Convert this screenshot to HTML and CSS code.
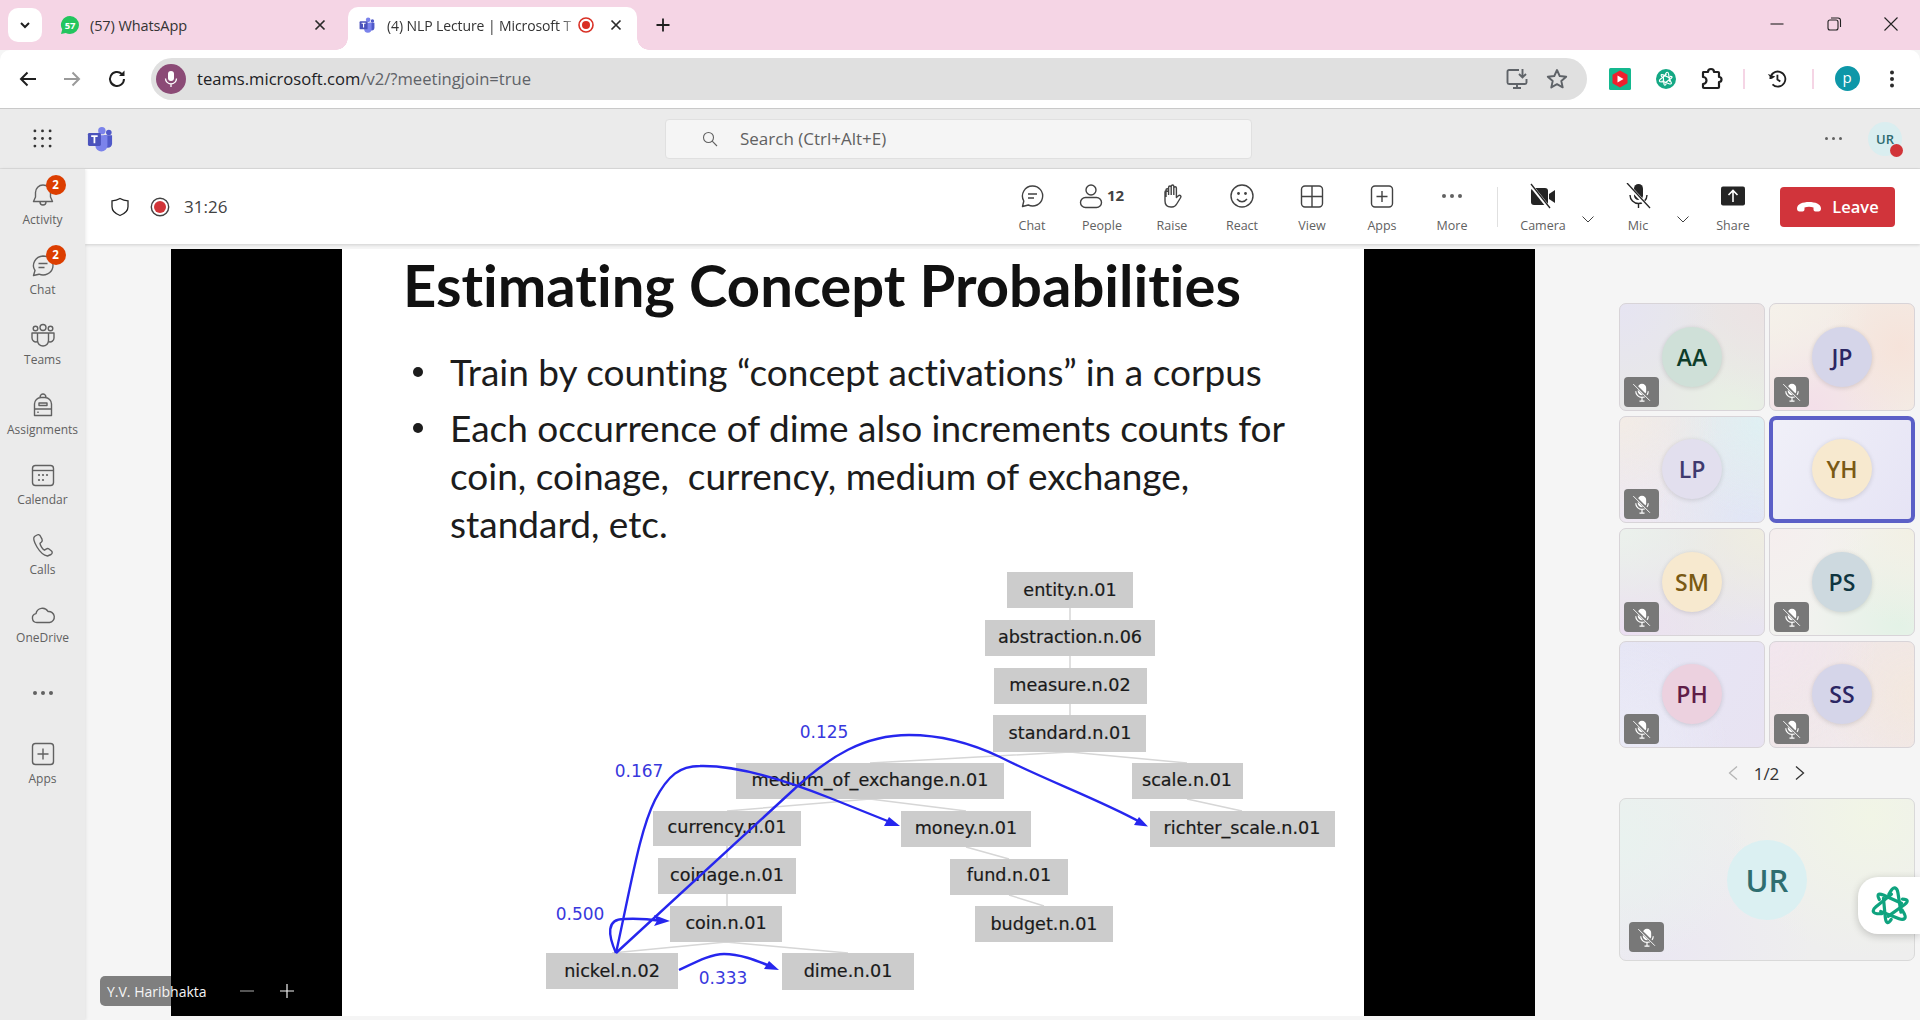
FILE: index.html
```html
<!DOCTYPE html>
<html lang="en">
<head>
<meta charset="utf-8">
<title>NLP Lecture | Microsoft Teams</title>
<link rel="stylesheet" href="styles.css">
</head>
<body>
<svg class="defs" aria-hidden="true">
  <symbol id="mute" viewBox="0 0 24 24">
    <rect x="7" y="2" width="10" height="14" rx="5" fill="#fff"/>
    <path d="M4.500 11a7.500 7.500 0 0 0 15 0M12 18.500V23M9 23h6" fill="none" stroke="#fff" stroke-width="1.400"/>
    <path d="M2 2 22 22" stroke="#787878" stroke-width="3.400"/>
    <path d="M1.500 2.500 21.500 22.500" stroke="#fff" stroke-width="1.100"/>
  </symbol>
  <symbol id="knot" viewBox="0 0 40 40">
    <g fill="none" stroke-width="3.200" stroke-linecap="round" transform="rotate(12 20 20)">
      <path d="M15.500 9Q17.500 1.500 20 1.500T24 5.500L31 24"/>
      <path d="M15.500 9Q17.500 1.500 20 1.500T24 5.500L31 24" transform="rotate(120 20 20)"/>
      <path d="M15.500 9Q17.500 1.500 20 1.500T24 5.500L31 24" transform="rotate(240 20 20)"/>
      <path d="M17 7Q18.500 3 20 3T23 7L29 26" transform="rotate(60 20 20)"/>
      <path d="M17 7Q18.500 3 20 3T23 7L29 26" transform="rotate(180 20 20)"/>
      <path d="M17 7Q18.500 3 20 3T23 7L29 26" transform="rotate(300 20 20)"/>
    </g>
  </symbol>
  <symbol id="teams" viewBox="0 0 28 28">
    <circle cx="16" cy="5" r="4" fill="#7b83eb"/>
    <circle cx="23.500" cy="7" r="3" fill="#5059c9"/>
    <path d="M18 10h9v9a4.500 4.500 0 0 1-9 0z" fill="#5059c9"/>
    <path d="M9 10h13v11a6.500 6.500 0 0 1-13 0z" fill="#7b83eb"/>
    <rect x="1" y="7.500" width="14" height="14" rx="1.500" fill="#4b53bc"/>
    <path d="M4.500 11h7M8 11v7.500" stroke="#fff" stroke-width="1.900" fill="none"/>
  </symbol>
</svg>

<header class="tabstrip">
  <div class="tab-menu">
    <svg class="i16" viewBox="0 0 16 16"><path d="M4 6l4 4 4-4" fill="none" stroke="#1f1f1f" stroke-width="2"/></svg>
  </div>
  <div class="tab">
    <svg class="i20 tab-icon-wa" viewBox="0 0 20 20"><path d="M10 1a9 9 0 0 1 0 18 9 9 0 0 1-4.300-1.100L1 19l1.200-4.500A9 9 0 0 1 10 1z" fill="#22c55e"/><text x="10" y="13.500" class="wa-count">57</text></svg>
    <span class="tab-title">(57) WhatsApp</span>
    <svg class="i16 tab-close" viewBox="0 0 16 16"><path d="M3.500 3.500l9 9M12.500 3.500l-9 9" stroke="#2b2b2b" stroke-width="1.700"/></svg>
  </div>
  <div class="tab tab-active">
    <svg class="i16 tab-icon" viewBox="0 0 28 28"><use href="#teams"/></svg>
    <span class="tab-title tab-title-fade">(4) NLP Lecture | Microsoft T</span>
    <svg class="i16 tab-rec" viewBox="0 0 16 16"><circle cx="8" cy="8" r="7" fill="none" stroke="#d93025" stroke-width="1.600"/><circle cx="8" cy="8" r="4" fill="#d93025"/></svg>
    <svg class="i16 tab-close tab-close-active" viewBox="0 0 16 16"><path d="M3.500 3.500l9 9M12.500 3.500l-9 9" stroke="#2b2b2b" stroke-width="1.700"/></svg>
  </div>
  <svg class="tab-plus" viewBox="0 0 18 18"><path d="M9 2.500v13M2.500 9h13" stroke="#1f1f1f" stroke-width="1.800"/></svg>
  <div class="win-controls">
    <svg class="i16" viewBox="0 0 16 16"><path d="M1.500 8h13" stroke="#222" stroke-width="1.100"/></svg>
    <svg class="i16" viewBox="0 0 16 16"><rect x="2" y="4" width="10" height="10" rx="2" fill="none" stroke="#222" stroke-width="1.100"/><path d="M5 2h7a2.500 2.500 0 0 1 2.500 2.500V11" fill="none" stroke="#222" stroke-width="1.100"/></svg>
    <svg class="i16" viewBox="0 0 16 16"><path d="M1.500 1.500l13 13M14.500 1.500l-13 13" stroke="#222" stroke-width="1.100"/></svg>
  </div>
</header>

<nav class="toolbar">
  <svg class="nav-btn" viewBox="0 0 24 24"><path d="M20 12H5M11.500 5.500 5 12l6.500 6.500" fill="none" stroke="#1f1f1f" stroke-width="2"/></svg>
  <svg class="nav-btn nav-fwd" viewBox="0 0 24 24"><path d="M4 12h15M12.500 5.500 19 12l-6.500 6.500" fill="none" stroke="#9a9a9a" stroke-width="2"/></svg>
  <svg class="nav-btn nav-reload" viewBox="0 0 24 24"><path d="M19 12a7 7 0 1 1-2.200-5.100" fill="none" stroke="#1f1f1f" stroke-width="2"/><path d="M19.500 3.500V9H14z" fill="#1f1f1f"/></svg>
  <div class="omnibox">
    <span class="omni-mic">
      <svg class="i20" viewBox="0 0 20 20"><rect x="7" y="2" width="6" height="10" rx="3" fill="#fff"/><path d="M4.500 9.500a5.500 5.500 0 0 0 11 0M10 15v3" fill="none" stroke="#fff" stroke-width="1.300"/></svg>
    </span>
    <span class="url"><span class="url-host">teams.microsoft.com</span>/v2/?meetingjoin=true</span>
    <svg class="omni-action" viewBox="0 0 24 24"><path d="M14 3H4a1.500 1.500 0 0 0-1.500 1.500v11A1.500 1.500 0 0 0 4 17h16a1.500 1.500 0 0 0 1.500-1.500V12" fill="none" stroke="#5f6368" stroke-width="1.900"/><path d="M8 21h8M12 17v4" stroke="#5f6368" stroke-width="1.900"/><path d="M17.500 2v8M14 7l3.500 3.500L21 7" fill="none" stroke="#5f6368" stroke-width="1.900"/></svg>
    <svg class="omni-action omni-star" viewBox="0 0 24 24"><path d="M12 3l2.700 6 6.500.7-4.900 4.300 1.400 6.400L12 17.100l-5.700 3.300 1.400-6.400L2.800 9.700 9.300 9z" fill="none" stroke="#5f6368" stroke-width="1.900" stroke-linejoin="round"/></svg>
  </div>
  <div class="tool-slots">
    <span class="slot slot-46"><svg class="i22" viewBox="0 0 22 22"><rect width="22" height="22" rx="1.500" fill="#14b88f"/><path d="M11 2.500l7.500 4.300v8.400L11 19.500l-7.500-4.300V6.800z" fill="#f01f2d"/><path d="M8.500 7.500l6 3.500-6 3.500z" fill="#fff"/></svg></span>
    <span class="slot slot-46"><svg class="i20 knot-badge" viewBox="0 0 20 20"><circle cx="10" cy="10" r="10"/><svg x="2.500" y="2.500" width="15" height="15" viewBox="0 0 40 40"><use href="#knot" stroke="#fff"/></svg></svg></span>
    <span class="slot slot-44"><svg class="i24" viewBox="0 0 24 24"><path d="M4.500 5H9a3 3 0 0 1 6 0h4a1 1 0 0 1 1 1v4a2.500 2.500 0 0 1 0 5v5a1 1 0 0 1-1 1H5a1 1 0 0 1-1-1v-3a3.500 3.500 0 0 0 0-7V6a1 1 0 0 1 .5-1z" fill="none" stroke="#1f1f1f" stroke-width="2.200" stroke-linejoin="round"/></svg></span>
    <span class="slot slot-22"><i class="tool-sep"></i></span>
    <span class="slot slot-44"><svg class="i20" viewBox="0 0 24 24"><path d="M4 12a9 9 0 1 1 2.600 6.400" fill="none" stroke="#1f1f1f" stroke-width="2.200"/><path d="M1 6l4.500 6L10 9z" fill="#1f1f1f"/><path d="M12.500 7v5.500l3.500 2.500" fill="none" stroke="#1f1f1f" stroke-width="2.200"/></svg></span>
    <span class="slot slot-28"><i class="tool-sep"></i></span>
    <span class="slot slot-40"><span class="profile">p</span></span>
    <span class="slot slot-50"><svg class="i20" viewBox="0 0 20 20"><circle cx="10" cy="3.500" r="2" fill="#2b2b2b"/><circle cx="10" cy="10" r="2" fill="#2b2b2b"/><circle cx="10" cy="16.500" r="2" fill="#2b2b2b"/></svg></span>
  </div>
</nav>

<div class="appbar">
  <svg class="waffle" viewBox="0 0 20 20"><g fill="#333"><circle cx="2" cy="2" r="1.500"/><circle cx="10" cy="2" r="1.500"/><circle cx="18" cy="2" r="1.500"/><circle cx="2" cy="10" r="1.500"/><circle cx="10" cy="10" r="1.500"/><circle cx="18" cy="10" r="1.500"/><circle cx="2" cy="18" r="1.500"/><circle cx="10" cy="18" r="1.500"/><circle cx="18" cy="18" r="1.500"/></g></svg>
  <svg class="teams-logo" viewBox="0 0 28 28"><use href="#teams"/></svg>
  <div class="search">
    <svg class="i16" viewBox="0 0 16 16"><circle cx="6.500" cy="6.500" r="5" fill="none" stroke="#616161" stroke-width="1.100"/><path d="M10.200 10.200 15 15" stroke="#616161" stroke-width="1.100"/></svg>
    <span class="search-text">Search (Ctrl+Alt+E)</span>
  </div>
  <div class="appbar-right">
    <span class="dots dots-small"><i></i><i></i><i></i></span>
    <span class="me">UR<i class="me-status"></i></span>
  </div>
</div>

<div class="main">
  <aside class="rail">
    <div class="rail-item">
      <span class="rail-icon"><svg class="i26" viewBox="0 0 26 26"><path d="M13 3a7.500 7.500 0 0 0-7.500 7.500V15L3.500 19.500h19L20.500 15v-4.500A7.500 7.500 0 0 0 13 3zM10 20a3 3 0 0 0 6 0" class="rail-stroke"/></svg><b class="badge">2</b></span>
      <span class="rail-label">Activity</span>
    </div>
    <div class="rail-item">
      <span class="rail-icon"><svg class="i26" viewBox="0 0 26 26"><path d="M13 4a10 9.500 0 1 1-4 18.200L3.500 23.500l1.500-5A10 9.500 0 0 1 13 4zM8.500 11.500h9M8.500 15.500h6" class="rail-stroke"/></svg><b class="badge">2</b></span>
      <span class="rail-label">Chat</span>
    </div>
    <div class="rail-item">
      <span class="rail-icon"><svg class="i26" viewBox="0 0 26 26"><circle cx="13" cy="5.500" r="3" class="rail-stroke"/><circle cx="5.500" cy="6.500" r="2.300" class="rail-stroke"/><circle cx="20.500" cy="6.500" r="2.300" class="rail-stroke"/><path d="M7.500 11h11v7.500a5.500 5.500 0 0 1-11 0zM7 11H2v5a4 4 0 0 0 5 3.800M19 11h5v5a4 4 0 0 1-5 3.800" class="rail-stroke"/></svg></span>
      <span class="rail-label">Teams</span>
    </div>
    <div class="rail-item">
      <span class="rail-icon"><svg class="i26" viewBox="0 0 26 26"><path d="M10 5.500C10 3.500 11.500 2 13 2s3 1.500 3 3.500M4.500 23.500V12a6.500 6.500 0 0 1 6.500-6.500h4a6.500 6.500 0 0 1 6.500 6.500v11.500zM4.500 17h17M9 11h8v2.500H9zM8 19.500v1.500" class="rail-stroke"/></svg></span>
      <span class="rail-label">Assignments</span>
    </div>
    <div class="rail-item">
      <span class="rail-icon"><svg class="i26" viewBox="0 0 26 26"><rect x="2.500" y="3.500" width="21" height="20" rx="3" class="rail-stroke"/><path d="M2.500 8.500h21" class="rail-stroke"/><g class="rail-fill"><circle cx="9" cy="13" r="1.100"/><circle cx="13" cy="13" r="1.100"/><circle cx="17" cy="13" r="1.100"/><circle cx="9" cy="18" r="1.100"/><circle cx="13" cy="18" r="1.100"/></g></svg></span>
      <span class="rail-label">Calendar</span>
    </div>
    <div class="rail-item">
      <span class="rail-icon"><svg class="i26" viewBox="0 0 26 26"><path d="M7 3 4.500 4.500C3 6 4 10 7 15s7 8.500 10.500 9l3.500-1.500c1.500-1 1.500-2.500.5-3.500l-2.500-2c-1-.8-2-.6-3 .2l-1.500 1c-1.500-.5-4.500-5-4.500-7l1.500-1.200c.8-.8 1-1.800.5-2.800L10 3.500C9.300 2.500 8 2.300 7 3z" class="rail-stroke"/></svg></span>
      <span class="rail-label">Calls</span>
    </div>
    <div class="rail-item">
      <span class="rail-icon"><svg class="i26" viewBox="0 0 26 26"><path d="M7 20.500a4.500 4.500 0 0 1-1-8.900A6.500 6.500 0 0 1 18 9.500a5.500 5.500 0 0 1 1.500 11z" class="rail-stroke"/></svg></span>
      <span class="rail-label rail-label-up">OneDrive</span>
    </div>
    <div class="rail-more"><span class="dots"><i></i><i></i><i></i></span></div>
    <div class="rail-item">
      <span class="rail-icon"><svg class="i26" viewBox="0 0 26 26"><rect x="2.500" y="2.500" width="21" height="21" rx="3" class="rail-stroke"/><path d="M13 7.500v11M7.500 13h11" class="rail-stroke"/></svg></span>
      <span class="rail-label">Apps</span>
    </div>
  </aside>

  <div class="content">
    <div class="meeting-bar">
      <svg class="shield" viewBox="0 0 20 20"><path d="M10 1.500c2.500 1.500 5 2.200 8 2.300v6c0 4.300-3.300 7-8 8.700-4.700-1.700-8-4.400-8-8.700v-6c3-.1 5.500-.8 8-2.300z" fill="none" stroke="#242424" stroke-width="1.300"/></svg>
      <svg class="rec" viewBox="0 0 20 20"><circle cx="10" cy="10" r="8.700" fill="none" stroke="#424242" stroke-width="1.400"/><circle cx="10" cy="10" r="6" fill="#d13438"/></svg>
      <span class="timer">31:26</span>
      <div class="actions">
        <div class="action"><svg class="i26" viewBox="0 0 26 26"><path d="M13.500 3a10 10 0 1 1-4.200 19L3.500 23.500l1.300-5.500A10 10 0 0 1 13.500 3zM9 11h9M9 15h6" class="act-stroke"/></svg><span class="action-label">Chat</span></div>
        <div class="action"><span class="people"><svg class="i26" viewBox="0 0 26 26"><circle cx="13" cy="7" r="5" class="act-stroke"/><rect x="2.500" y="14.500" width="21" height="10" rx="5" class="act-stroke"/></svg><b class="people-count">12</b></span><span class="action-label">People</span></div>
        <div class="action"><svg class="i26" viewBox="0 0 26 26"><path d="M7 14V7a1.300 1.300 0 0 1 2.600 0v5M9.600 12V4.300a1.300 1.300 0 0 1 2.600 0V12M12.200 12V3.300a1.300 1.300 0 0 1 2.600 0V12M14.800 12V5a1.300 1.300 0 0 1 2.600 0v9.500l2-1.800c1.500-1.200 3.200.3 2.300 1.800l-4 6.500c-1 1.700-2.300 3-4.700 3h-1c-4 0-6-2.500-6-6V9a1.300 1.300 0 0 1 2.600 0" class="act-stroke"/></svg><span class="action-label">Raise</span></div>
        <div class="action"><svg class="i26" viewBox="0 0 26 26"><circle cx="13" cy="13" r="11" class="act-stroke"/><circle cx="9.500" cy="10.500" r="1.400" fill="#424242"/><circle cx="16.500" cy="10.500" r="1.400" fill="#424242"/><path d="M8 16c1.500 2 3.200 2.700 5 2.700s3.500-.7 5-2.700" class="act-stroke"/></svg><span class="action-label">React</span></div>
        <div class="action"><svg class="i26" viewBox="0 0 26 26"><rect x="2.500" y="3" width="21" height="21" rx="3.500" class="act-stroke"/><path d="M13 3v21M2.500 13.500h21" class="act-stroke"/></svg><span class="action-label">View</span></div>
        <div class="action"><svg class="i26" viewBox="0 0 26 26"><rect x="2.500" y="3" width="21" height="21" rx="3.500" class="act-stroke"/><path d="M13 8v11M7.500 13.500h11" class="act-stroke"/></svg><span class="action-label">Apps</span></div>
        <div class="action"><span class="dots-slot"><span class="dots"><i></i><i></i><i></i></span></span><span class="action-label">More</span></div>
        <i class="divider"></i>
        <div class="action"><svg class="i26" viewBox="0 0 26 26"><rect x="1" y="5" width="17" height="17" rx="3" fill="#242424"/><path d="M19 11l6-4v13l-6-4z" fill="#242424"/><path d="M0 1 19 25" stroke="#fff" stroke-width="3.600"/><path d="M1 1 20 25" stroke="#242424" stroke-width="1.300"/></svg><span class="action-label">Camera</span></div>
        <svg class="chev" viewBox="0 0 14 14"><path d="M1.500 4.500 7 10l5.500-5.500" fill="none" stroke="#424242" stroke-width="1"/></svg>
        <div class="action action-mic"><svg class="i26" viewBox="0 0 26 26"><rect x="9" y="1" width="9" height="16" rx="4.500" fill="#242424"/><path d="M5 12a8.500 8.500 0 0 0 17 0M13.500 20.500V25" fill="none" stroke="#242424" stroke-width="1.400"/><path d="M1 0 24 25" stroke="#fff" stroke-width="3.600"/><path d="M2 0 25 25" stroke="#242424" stroke-width="1.300"/></svg><span class="action-label">Mic</span></div>
        <svg class="chev" viewBox="0 0 14 14"><path d="M1.500 4.500 7 10l5.500-5.500" fill="none" stroke="#424242" stroke-width="1"/></svg>
        <div class="action action-share"><svg class="i26" viewBox="0 0 26 26"><rect x="1" y="3.500" width="24" height="19" rx="2" fill="#242424"/><path d="M13 19V8M8.500 12 13 7.500l4.500 4.500" fill="none" stroke="#fff" stroke-width="1.600"/></svg><span class="action-label">Share</span></div>
        <button class="leave"><svg class="leave-icon" viewBox="0 0 26 14"><path d="M1 8.500C1 4 7 2 13 2s12 2 12 6.500c0 2-1 3-2.500 3h-3c-1.500 0-2-1-2-2.200V7.500C16 7 14.500 6.800 13 6.800S10 7 8.500 7.500v1.800c0 1.200-.5 2.200-2 2.200h-3C2 11.500 1 10.500 1 8.500z" fill="#fff"/></svg>Leave</button>
      </div>
    </div>

    <div class="stage">
      <span class="name-chip"></span>
      <section class="video">
        <div class="slide">
          <h1 class="slide-title">Estimating Concept Probabilities</h1>
          <ul class="slide-list">
            <li>Train by counting “concept activations” in a corpus</li>
            <li>Each occurrence of dime also increments counts for<br>coin, coinage,&nbsp; currency, medium of exchange,<br>standard, etc.</li>
          </ul>
          <svg class="graph" viewBox="342 560 1022 456">
            <g class="edges">
              <path d="M1070 608v12M1070 656v12M1070 704v11M1070 752 870 763M1070 752 1187 763M870 799 727 811M870 799 966 811M727 846v12M727 894v12M726 942 612 953M726 942 848 953M966 847 1009 859M1009 895 1044 906M1187 799 1242 811"/>
            </g>
            <g class="nodes">
              <rect x="1007" y="572" width="126" height="36"/>
              <rect x="985" y="620" width="170" height="36"/>
              <rect x="994" y="668" width="153" height="36"/>
              <rect x="993" y="715" width="153" height="37"/>
              <rect x="736" y="763" width="268" height="36"/>
              <rect x="1132" y="763" width="111" height="36"/>
              <rect x="653" y="811" width="148" height="35"/>
              <rect x="901" y="811" width="130" height="36"/>
              <rect x="1150" y="811" width="185" height="36"/>
              <rect x="658" y="858" width="138" height="36"/>
              <rect x="950" y="859" width="118" height="36"/>
              <rect x="670" y="906" width="112" height="36"/>
              <rect x="975" y="906" width="138" height="36"/>
              <rect x="546" y="953" width="132" height="36"/>
              <rect x="782" y="953" width="132" height="37"/>
            </g>
            <g class="node-text">
              <text x="1070" y="596">entity.n.01</text>
              <text x="1070" y="643">abstraction.n.06</text>
              <text x="1070" y="691">measure.n.02</text>
              <text x="1070" y="739">standard.n.01</text>
              <text x="870" y="786">medium_of_exchange.n.01</text>
              <text x="1187" y="786">scale.n.01</text>
              <text x="727" y="833">currency.n.01</text>
              <text x="966" y="834">money.n.01</text>
              <text x="1242" y="834">richter_scale.n.01</text>
              <text x="727" y="881">coinage.n.01</text>
              <text x="1009" y="881">fund.n.01</text>
              <text x="726" y="929">coin.n.01</text>
              <text x="1044" y="930">budget.n.01</text>
              <text x="612" y="977">nickel.n.02</text>
              <text x="848" y="977">dime.n.01</text>
            </g>
            <g class="arrows">
              <path d="M616 953C608 935 606 919 624 919C640 918 655 920 662 921"/>
              <path d="M616 953C632 880 640 830 655 800C668 775 680 766 700 766C740 765 790 782 830 798L890 822"/>
              <path d="M616 953L790 793C830 755 865 735 909 735C945 735 975 745 1000 757C1050 782 1100 800 1140 822"/>
              <path d="M679 970C700 960 712 954 724 954C740 954 755 960 770 966"/>
            </g>
            <g class="heads">
              <polygon points="670,921 654,915 657,921 654,926"/>
              <polygon points="900,826 884,826 889,817"/>
              <polygon points="1148,826.500 1134,825 1139,817"/>
              <polygon points="779,970 764,969 769,961"/>
            </g>
            <g class="weights">
              <text x="824" y="738">0.125</text>
              <text x="639" y="777">0.167</text>
              <text x="580" y="920">0.500</text>
              <text x="723" y="984">0.333</text>
            </g>
          </svg>
        </div>
        <div class="zoom-controls">
          <svg class="i16 zoom-minus" viewBox="0 0 16 16"><path d="M1 8h14" stroke="#7a7a7a" stroke-width="1.400"/></svg>
          <svg class="i16" viewBox="0 0 16 16"><path d="M8 1v14M1 8h14" stroke="#f2f2f2" stroke-width="1.200"/></svg>
        </div>
      </section>
      <span class="name-text">Y.V. Haribhakta</span>

      <aside class="gallery">
        <div class="tiles">
          <div class="tile tile-aa"><span class="avatar av-green">AA</span><span class="muted"><svg class="i20" viewBox="0 0 24 24"><use href="#mute"/></svg></span></div>
          <div class="tile tile-jp"><span class="avatar av-indigo">JP</span><span class="muted"><svg class="i20" viewBox="0 0 24 24"><use href="#mute"/></svg></span></div>
          <div class="tile tile-lp"><span class="avatar av-lilac">LP</span><span class="muted"><svg class="i20" viewBox="0 0 24 24"><use href="#mute"/></svg></span></div>
          <div class="tile tile-yh"><span class="avatar av-amber">YH</span></div>
          <div class="tile tile-sm"><span class="avatar av-amber">SM</span><span class="muted"><svg class="i20" viewBox="0 0 24 24"><use href="#mute"/></svg></span></div>
          <div class="tile tile-ps"><span class="avatar av-slate">PS</span><span class="muted"><svg class="i20" viewBox="0 0 24 24"><use href="#mute"/></svg></span></div>
          <div class="tile tile-ph"><span class="avatar av-rose">PH</span><span class="muted"><svg class="i20" viewBox="0 0 24 24"><use href="#mute"/></svg></span></div>
          <div class="tile tile-ss"><span class="avatar av-indigo">SS</span><span class="muted"><svg class="i20" viewBox="0 0 24 24"><use href="#mute"/></svg></span></div>
        </div>
        <div class="pager">
          <svg class="pager-chev" viewBox="0 0 12 16"><path d="M10 1.500 2.500 8l7.500 6.500" fill="none" stroke="#b5b5b5" stroke-width="1.300"/></svg>
          <span class="pager-text">1/2</span>
          <svg class="pager-chev" viewBox="0 0 12 16"><path d="M2 1.500 9.500 8 2 14.500" fill="none" stroke="#333" stroke-width="1.300"/></svg>
        </div>
        <div class="tile tile-self"><span class="avatar avatar-large">UR</span><span class="muted muted-self"><svg class="i20" viewBox="0 0 24 24"><use href="#mute"/></svg></span></div>
      </aside>
      <div class="float-btn"><svg class="float-knot" viewBox="0 0 40 40"><use href="#knot" stroke="#0fa37f"/></svg></div>
    </div>
  </div>
</div>
</body>
</html>
```

FILE: styles.css
```css
* { box-sizing: border-box; }
html, body { margin: 0; height: 100%; }
body {
  width: 1920px;
  height: 1020px;
  overflow: hidden;
  display: flex;
  flex-direction: column;
  font-family: "Open Sans", "Noto Sans", sans-serif;
  color: #242424;
  background: #f5f5f5;
}
.defs { display: none; }
svg { display: block; flex: none; }
.i16 { width: 16px; height: 16px; }
.i20 { width: 20px; height: 20px; }
.i22 { width: 22px; height: 22px; }
.i24 { width: 24px; height: 24px; }
.i26 { width: 26px; height: 26px; }

/* browser tab strip */
.tabstrip {
  height: 50px;
  flex: none;
  display: flex;
  align-items: flex-end;
  padding-left: 8px;
  background: #f5d5e5;
}
.tab-menu {
  width: 34px;
  height: 34px;
  margin-bottom: 8px;
  border-radius: 10px;
  background: #fff;
  display: flex;
  align-items: center;
  justify-content: center;
}
.tab {
  position: relative;
  width: 290px;
  height: 43px;
  margin-left: 8px;
  padding: 0 12px 7px 12px;
  display: flex;
  align-items: center;
  font-size: 14.500px;
  letter-spacing: -.1px;
  color: #333;
}
.tab-icon { margin-right: 12px; }
.tab-icon-wa { margin: 0 10px 0 -2px; }
.wa-count { font: 700 9.500px "Open Sans", sans-serif; fill: #fff; text-anchor: middle; }
.tab-title { flex: 1; white-space: nowrap; overflow: hidden; min-width: 0; }
.tab-active {
  width: 289px;
  padding-left: 11px;
  background: #fff;
  border-radius: 10px 10px 0 0;
}
.tab-active::before, .tab-active::after {
  content: "";
  position: absolute;
  bottom: 0;
  width: 12px;
  height: 12px;
}
.tab-active::before { left: -12px; background: radial-gradient(circle at 0 0, #f5d5e5 11.500px, #fff 12px); }
.tab-active::after { right: -12px; background: radial-gradient(circle at 100% 0, #f5d5e5 11.500px, #fff 12px); }
.tab-title-fade {
  flex: none;
  width: 188px;
  font-size: 14px;
  -webkit-mask-image: linear-gradient(90deg, #000 93%, rgba(0, 0, 0, .15));
  mask-image: linear-gradient(90deg, #000 93%, rgba(0, 0, 0, .15));
}
.tab-rec { margin-left: 3px; }
.tab-close-active { margin-left: 14px; }
.tab-plus { width: 18px; height: 18px; margin: 0 0 16px 17px; }
.win-controls {
  margin-left: auto;
  width: 130px;
  height: 50px;
  margin-right: 21px;
  display: flex;
  justify-content: space-between;
  align-items: center;
  padding-bottom: 2px;
}

/* browser toolbar */
.toolbar {
  height: 59px;
  flex: none;
  display: flex;
  align-items: center;
  padding: 0 0 1px 16px;
  background: #fff;
  border-bottom: 1px solid #c9c9c9;
  border-radius: 10px 10px 0 0;
  position: relative;
}
.nav-btn { width: 24px; height: 24px; }
.nav-fwd { margin-left: 20px; }
.nav-reload { margin-left: 21px; }
.omnibox {
  width: 1436px;
  height: 42px;
  margin-left: 22px;
  padding: 0 18px 0 5px;
  border-radius: 21px;
  background: #e0e0e0;
  display: flex;
  align-items: center;
  flex: none;
}
.omni-mic {
  width: 30px;
  height: 30px;
  border-radius: 50%;
  background: #8b4a76;
  display: flex;
  align-items: center;
  justify-content: center;
  flex: none;
}
.url { margin-left: 11px; font-size: 16.600px; color: #5f6368; flex: 1; white-space: nowrap; }
.url-host { color: #202124; }
.omni-action { width: 24px; height: 24px; }
.omni-star { margin-left: 16px; }
.tool-slots { display: flex; align-items: center; margin-left: 10px; }
.slot { display: flex; justify-content: center; align-items: center; height: 30px; }
.slot-22 { width: 22px; }
.slot-28 { width: 28px; }
.slot-40 { width: 40px; }
.slot-44 { width: 44px; }
.slot-46 { width: 46px; }
.slot-50 { width: 50px; }
.knot-badge { fill: #14a884; }
.tool-sep { width: 2px; height: 20px; background: #f5d5e5; }
.profile {
  width: 25px;
  height: 25px;
  border-radius: 50%;
  background: #0e97a8;
  color: #fff;
  font-size: 15px;
  line-height: 23px;
  text-align: center;
}

/* teams header */
.appbar {
  height: 60px;
  flex: none;
  display: flex;
  align-items: center;
  background: #ebebeb;
  border-bottom: 1px solid #dcdcdc;
}
.waffle { width: 19px; height: 19px; margin-left: 33px; }
.teams-logo { width: 26px; height: 26px; margin-left: 35px; }
.search {
  width: 587px;
  height: 40px;
  margin-left: 552px;
  padding-left: 36px;
  display: flex;
  align-items: center;
  background: #f5f5f5;
  border: 1px solid #e0e0e0;
  border-radius: 4px;
}
.search-text { margin-left: 22px; font-size: 17px; color: #616161; }
.appbar-right { margin-left: auto; display: flex; align-items: center; padding-right: 18px; }
.dots { display: inline-flex; gap: 4px; }
.dots i { width: 4px; height: 4px; border-radius: 50%; background: #616161; }
.dots-small i { width: 3px; height: 3px; background: #616161; }
.me {
  position: relative;
  width: 34px;
  height: 34px;
  margin-left: 26px;
  border-radius: 50%;
  background: #daeef0;
  color: #2e6b70;
  font-size: 13px;
  font-weight: 600;
  line-height: 34px;
  text-align: center;
}
.me-status {
  position: absolute;
  right: -1px;
  bottom: -1px;
  width: 13px;
  height: 13px;
  border-radius: 50%;
  background: #d13438;
}

/* layout */
.main { flex: 1; min-height: 0; display: flex; }
.rail {
  width: 85px;
  flex: none;
  padding-top: 2px;
  background: #ebebeb;
  box-shadow: 1px 0 3px rgba(0, 0, 0, .08);
  position: relative;
  z-index: 3;
}
.rail-item {
  height: 70px;
  padding-top: 11px;
  display: flex;
  flex-direction: column;
  align-items: center;
}
.rail-icon { position: relative; display: block; height: 26px; }
.rail-label { margin-top: 4px; font-size: 12px; line-height: 16px; color: #616161; white-space: nowrap; }
.rail-label-up { margin-top: 2px; }
.rail-stroke { fill: none; stroke: #616161; stroke-width: 1.400; stroke-linejoin: round; }
.rail-fill { fill: #616161; }
.badge {
  position: absolute;
  left: 16px;
  top: -7px;
  width: 20px;
  height: 20px;
  border-radius: 50%;
  background: #dc3e00;
  color: #fff;
  font-size: 11.500px;
  font-weight: 700;
  line-height: 20px;
  text-align: center;
}
.rail-more { height: 64px; margin-bottom: 5px; display: flex; align-items: center; justify-content: center; }
.content { flex: 1; min-width: 0; display: flex; flex-direction: column; }

/* meeting bar */
.meeting-bar {
  height: 75px;
  flex: none;
  display: flex;
  align-items: center;
  background: #fff;
  box-shadow: 0 1px 3px rgba(0, 0, 0, .16);
  position: relative;
  z-index: 2;
}
.shield { width: 20px; height: 20px; margin-left: 25px; }
.rec { width: 20px; height: 20px; margin-left: 20px; }
.timer { margin-left: 14px; font-size: 17px; color: #424242; }
.actions { margin-left: auto; display: flex; align-items: center; padding-right: 25px; }
.action {
  width: 70px;
  padding-top: 4px;
  display: flex;
  flex-direction: column;
  align-items: center;
  font-size: 12.500px;
  color: #616161;
}
.action-label { margin-top: 8px; line-height: 17px; }
.act-stroke { fill: none; stroke: #424242; stroke-width: 1.400; stroke-linejoin: round; }
.people { position: relative; display: block; height: 26px; margin-left: -22px; }
.people-count {
  position: absolute;
  left: 29px;
  top: 2px;
  font-size: 15px;
  color: #424242;
}
.dots-slot { height: 26px; display: flex; align-items: center; }
.divider { width: 1px; height: 40px; margin: 0 10px; background: #e0e0e0; }
.chev { width: 14px; height: 14px; margin: 24px 3px 0; }
.action-mic { margin-left: 5px; }
.action-share { margin-left: 5px; }
.leave {
  width: 115px;
  height: 40px;
  margin-left: 12px;
  border: 0;
  border-radius: 4px;
  background: #d1343b;
  color: #fff;
  font: 600 16.500px "Open Sans", sans-serif;
  display: flex;
  align-items: center;
  justify-content: center;
}
.leave-icon { width: 26px; height: 14px; margin-right: 10px; }

/* stage */
.stage { flex: 1; min-height: 0; display: flex; position: relative; background: #f5f5f5; }
.video {
  position: relative;
  width: 1364px;
  height: 767px;
  margin: 5px 0 0 86px;
  background: #000;
  display: flex;
  justify-content: center;
  flex: none;
}
.slide {
  width: 1022px;
  background: #fff;
  display: flex;
  flex-direction: column;
  font-family: Lato, "Open Sans", sans-serif;
  font-variant-ligatures: none;
  color: #111;
}
.slide-title {
  margin: 6px 0 0 61px;
  font-size: 58px;
  line-height: 60px;
  font-weight: 700;
  white-space: nowrap;
}
.slide-list { margin: 33px 0 0; padding: 0 0 0 108px; list-style: none; font-size: 37px; line-height: 48px; color: #1c1c1c; }
.slide-list li { position: relative; white-space: nowrap; }
.slide-list li + li { margin-top: 8px; }
.slide-list li::before {
  content: "";
  position: absolute;
  left: -37px;
  top: 19px;
  width: 10px;
  height: 10px;
  border-radius: 50%;
  background: #1c1c1c;
}
.graph { width: 1022px; height: 456px; margin-top: 12px; }
.edges path { fill: none; stroke: #d6d6d6; stroke-width: 1.500; }
.nodes rect { fill: #cccccc; }
.node-text text { font: 17.600px "DejaVu Sans", sans-serif; fill: #1a1a1a; stroke: #1a1a1a; stroke-width: .2px; text-anchor: middle; }
.arrows path { fill: none; stroke: #2626ee; stroke-width: 2.400; }
.heads polygon { fill: #2626ee; }
.weights text { font: 17px "DejaVu Sans", sans-serif; fill: #3838dd; text-anchor: middle; }
.zoom-controls {
  position: absolute;
  left: 68px;
  bottom: 17px;
  display: flex;
  gap: 24px;
}
.name-chip {
  position: absolute;
  left: 15px;
  top: 732px;
  width: 90px;
  height: 30px;
  border-radius: 5px;
  background: #7f7f7f;
}
.name-text {
  position: absolute;
  left: 22px;
  top: 733px;
  line-height: 30px;
  font-size: 14px;
  color: #f5f5f5;
  z-index: 1;
  white-space: nowrap;
}

/* gallery */
.gallery { width: 296px; margin: 59px 0 0 84px; flex: none; }
.tiles { display: grid; grid-template-columns: 146px 146px; grid-auto-rows: 107.500px; gap: 5px 4px; }
.tile {
  position: relative;
  display: flex;
  align-items: center;
  justify-content: center;
  border: 1px solid #d8d4d8;
  border-radius: 7px;
}
.avatar {
  width: 60px;
  height: 60px;
  border-radius: 50%;
  display: flex;
  align-items: center;
  justify-content: center;
  font-size: 23px;
  font-weight: 600;
  box-shadow: 0 1px 5px rgba(0, 0, 0, .14);
}
.av-green { background: #cfe0d8; color: #0e3d2a; }
.av-indigo { background: #d5d5e9; color: #2b2663; }
.av-lilac { background: #e2dfee; color: #3f3a6e; }
.av-amber { background: #f7e9cf; color: #7a5a14; }
.av-slate { background: #cdd9df; color: #0f3540; }
.av-rose { background: #ecd1df; color: #5f1d47; }
.avatar-large {
  width: 80px;
  height: 80px;
  font-size: 31px;
  background: #dbf0f2;
  color: #2f6e70;
  box-shadow: none;
}
.muted {
  position: absolute;
  left: 4px;
  bottom: 3px;
  width: 35px;
  height: 30px;
  border-radius: 4px;
  background: #787878;
  display: flex;
  align-items: center;
  justify-content: center;
}
.muted-self { left: 9px; bottom: 8px; }
.tile-aa { background: radial-gradient(circle at 0 0, #e6e4f2, transparent 55%), radial-gradient(circle at 100% 0, #ece3e3, transparent 55%), radial-gradient(circle at 80% 100%, #e8f0e4, transparent 60%), #e8e8e8; }
.tile-jp { background: radial-gradient(circle at 0 0, #f5f1ea, transparent 55%), radial-gradient(circle at 90% 40%, #f6e3da, transparent 55%), radial-gradient(circle at 30% 100%, #f3dfe9, transparent 65%), #f3ece6; }
.tile-lp { background: radial-gradient(circle at 0 0, #f3ece6, transparent 55%), radial-gradient(circle at 100% 5%, #dff0f3, transparent 55%), radial-gradient(circle at 90% 100%, #e1e6f6, transparent 60%), radial-gradient(circle at 0 100%, #efe8f3, transparent 60%), #e9e8ec; }
.tile-yh { background: linear-gradient(120deg, #f0f0f8, #e6e4f5); border: 4px solid #5b5fc7; }
.tile-sm { background: radial-gradient(circle at 0 0, #ebf1ec, transparent 55%), radial-gradient(circle at 100% 0, #efede1, transparent 55%), radial-gradient(circle at 0 100%, #ecdff3, transparent 60%), radial-gradient(circle at 100% 100%, #e8e4f1, transparent 60%), #e9e8e8; }
.tile-ps { background: radial-gradient(circle at 0 0, #f5eeee, transparent 55%), radial-gradient(circle at 100% 0, #f2f0e4, transparent 55%), radial-gradient(circle at 90% 90%, #e3f2e6, transparent 60%), #f2f2ef; }
.tile-ph { background: radial-gradient(circle at 0 100%, #ebebf7, transparent 60%), linear-gradient(120deg, #e6e6f5, #e8e3f2); }
.tile-ss { background: radial-gradient(circle at 0 0, #f2e6ee, transparent 60%), radial-gradient(circle at 100% 50%, #f3e8df, transparent 60%), radial-gradient(circle at 50% 100%, #f1e9ec, transparent 60%), #f0e7e8; }
.tile-self { height: 163px; border-color: #d9d9d9; background: radial-gradient(circle at 0 25%, #e9f2ef, transparent 40%), radial-gradient(circle at 85% 10%, #f1f5e6, transparent 50%), radial-gradient(circle at 15% 100%, #ebe8f2, transparent 50%), #eeeeee; }
.pager { height: 50px; display: flex; align-items: center; justify-content: center; gap: 15px; padding-right: 1px; }
.pager-chev { width: 12px; height: 16px; }
.pager-text { font-size: 17px; color: #333; }
.float-btn {
  position: absolute;
  right: 0;
  top: 633px;
  width: 62px;
  height: 57px;
  border-radius: 20px 0 0 20px;
  background: #fff;
  box-shadow: 0 2px 8px rgba(0, 0, 0, .2);
  display: flex;
  align-items: center;
  padding-left: 13px;
}
.float-knot { width: 40px; height: 40px; }
```
